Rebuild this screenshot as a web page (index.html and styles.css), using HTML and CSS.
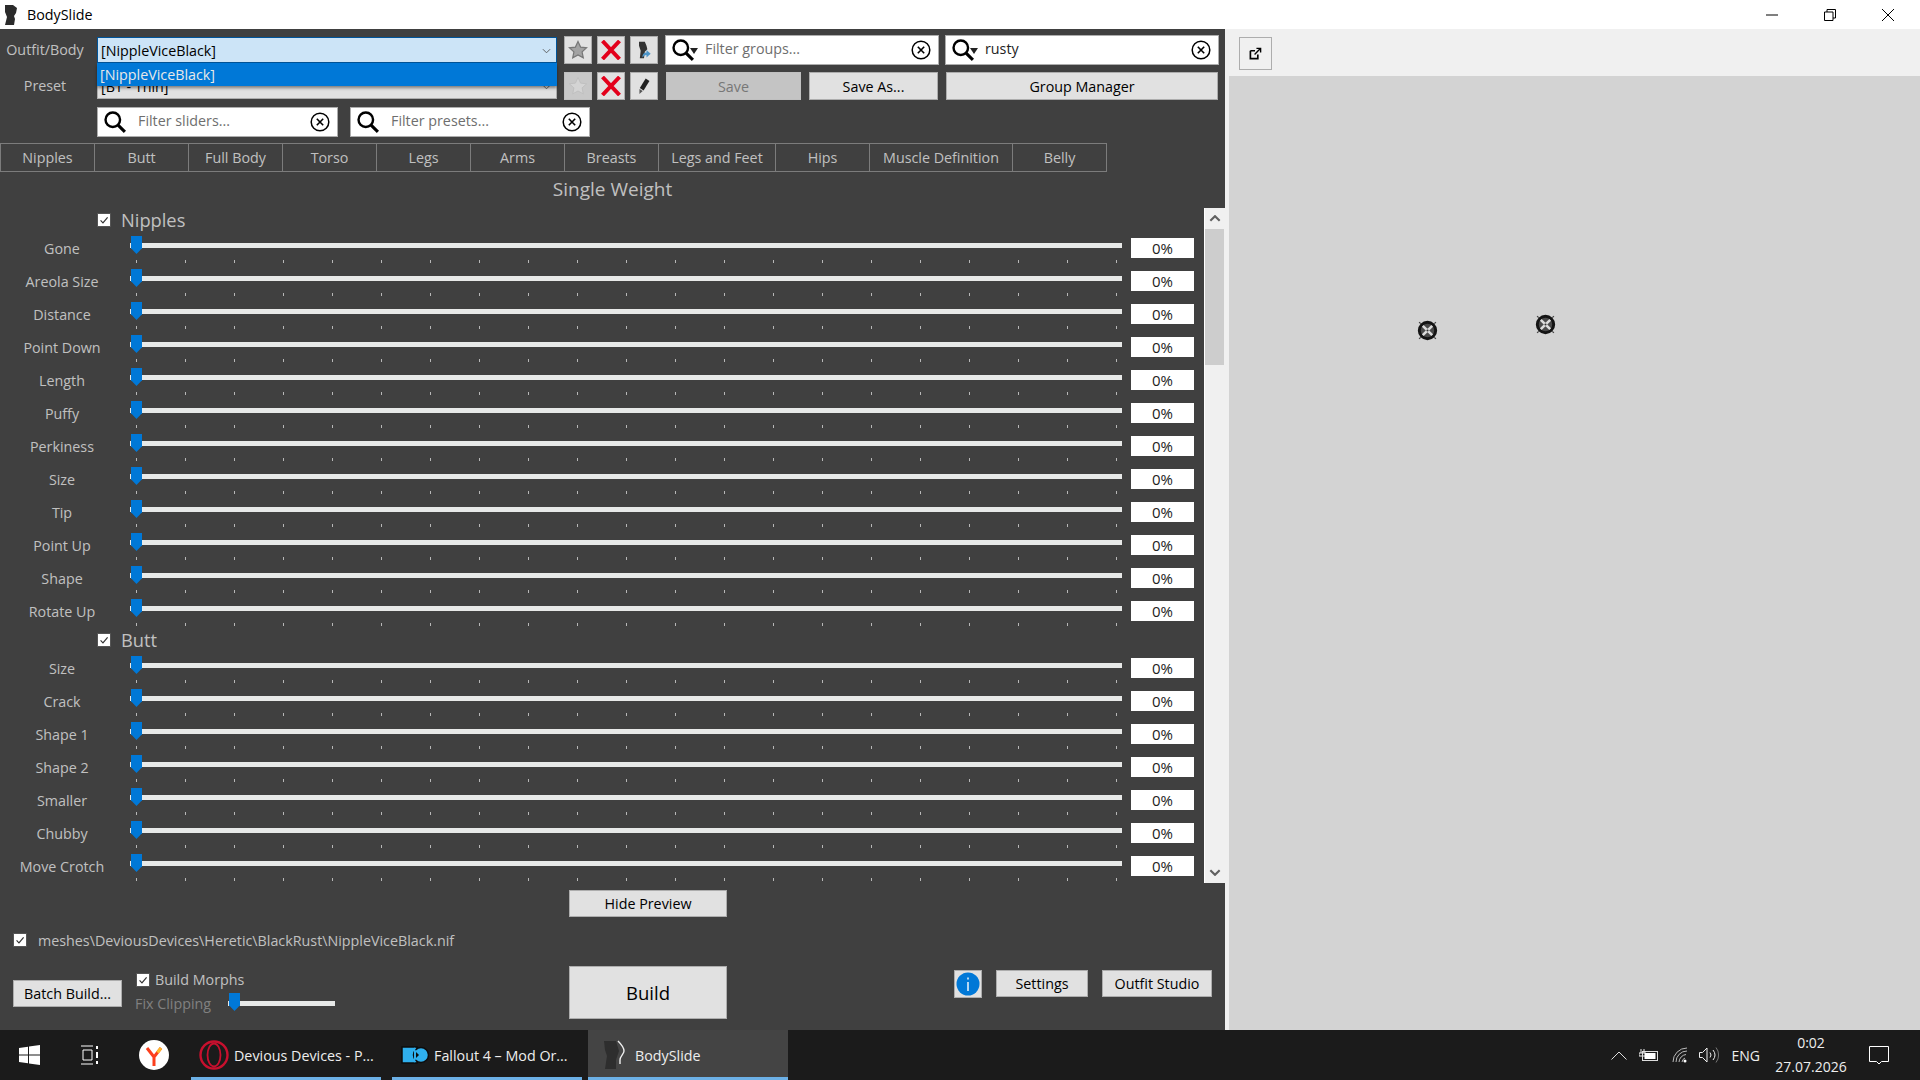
FILE: index.html
```html
<!DOCTYPE html>
<html lang="en">
<head>
    <meta charset="UTF-8">
    <title>BodySlide</title>
    <link rel="stylesheet" href="styles.css">
</head>
<body>
    <svg class="icon-defs" width="0" height="0">
        <defs>
            <symbol id="i-search" viewBox="0 0 20 20"><circle cx="8" cy="8" r="6.6" fill="none" stroke="#000" stroke-width="2.2"/><path d="M12.8 12.8 19 19" stroke="#000" stroke-width="2.8" fill="none"/></symbol>
            <symbol id="i-clear" viewBox="0 0 20 20"><circle cx="10" cy="10" r="8.8" fill="none" stroke="#000" stroke-width="1.5"/><path d="M6.8 6.8l6.4 6.4M13.2 6.8l-6.4 6.4" stroke="#000" stroke-width="1.6" fill="none"/></symbol>
            <symbol id="i-star" viewBox="0 0 20 20"><path d="M10 1.5l2.6 5.6 6 .7-4.5 4.1 1.2 6L10 15l-5.3 2.9 1.2-6L1.4 7.8l6-.7z" fill="#a3a3a3" stroke="#777" stroke-width="1.2"/></symbol>
            <symbol id="i-star-off" viewBox="0 0 20 20"><path d="M10 1.5l2.6 5.6 6 .7-4.5 4.1 1.2 6L10 15l-5.3 2.9 1.2-6L1.4 7.8l6-.7z" fill="#d4d4d4" stroke="#c0c0c0" stroke-width="1"/></symbol>
            <symbol id="i-cross" viewBox="0 0 20 20"><path d="M1.500 1l17 18M18.500 1l-17 18" stroke="#e3001b" stroke-width="4" fill="none"/></symbol>
            <symbol id="i-body" viewBox="0 0 20 24"><path d="M4 2h7l2 5 1 4-3 3-1 8H5l1-9-2-6z" fill="#333"/><path d="M8 21c0-4 2-6 5-6v-3l5 4.500-5 4.500v-3c-2 0-3 1-5 3z" fill="#4c94c8"/></symbol>
            <symbol id="i-pen" viewBox="0 0 20 24"><path d="M12 3l4.500 3-7 11.500-4.500-3z" fill="#222"/><path d="M4.500 15.500l4 2.500-4 3.500z" fill="#555"/></symbol>
            <symbol id="i-check" viewBox="0 0 14 14"><path d="M3 7.500l2.800 2.800L11.200 4" stroke="#333" stroke-width="1.400" fill="none"/></symbol>
            <symbol id="i-marker" viewBox="0 0 20 20"><circle cx="10" cy="10" r="7.800" fill="#4a4a4a" stroke="#141414" stroke-width="2.800"/><path d="M5.500 5.500l9 9M14.500 5.500l-9 9" stroke="#dcdcdc" stroke-width="2.400"/><circle cx="10" cy="10" r="1" fill="#333"/><path d="M2 2l1.500 1.500M18 2l-1.500 1.500M2 18l1.500-1.500M18 18l-1.500-1.500" stroke="#444" stroke-width="1.200"/></symbol>
        </defs>
    </svg>

    <header class="titlebar">
        <svg class="app-logo" viewBox="0 0 14 20"><path d="M1 0h8l4 3-1 5-2 3 1 3-1 6H1l2-8-2-5z" fill="#2b2b2b"/></svg>
        <span class="app-name">BodySlide</span>
        <div class="window-btns">
            <svg viewBox="0 0 12 12"><path d="M0 6h12" stroke="#000" fill="none"/></svg>
            <svg viewBox="0 0 12 12"><path d="M.5 3h8.500v8.500H.5zM3 3V.5h8.500V9H9" stroke="#000" fill="none"/></svg>
            <svg viewBox="0 0 12 12"><path d="M0 0l12 12M12 0L0 12" stroke="#000" fill="none"/></svg>
        </div>
    </header>

    <main class="app">
        <section class="panel">
            <div class="form-row row-outfit">
                <label class="form-label">Outfit/Body</label>
                <div class="combo combo-open">
                    <span>[NippleViceBlack]</span>
                    <svg class="combo-arrow" viewBox="0 0 10 6"><path d="M1 1l4 4 4-4" stroke="#555" fill="none"/></svg>
                    <div class="combo-list">[NippleViceBlack]</div>
                </div>
                <button class="icon-btn star-btn"><svg><use href="#i-star"/></svg></button>
                <button class="icon-btn"><svg><use href="#i-cross"/></svg></button>
                <button class="icon-btn"><svg><use href="#i-body"/></svg></button>
                <div class="search search-groups">
                    <svg class="search-icon"><use href="#i-search"/></svg>
                    <span class="caret"></span>
                    <span class="search-text">Filter groups...</span>
                    <svg class="clear-icon"><use href="#i-clear"/></svg>
                </div>
                <div class="search search-outfits">
                    <svg class="search-icon"><use href="#i-search"/></svg>
                    <span class="caret"></span>
                    <span class="search-text is-value">rusty</span>
                    <svg class="clear-icon"><use href="#i-clear"/></svg>
                </div>
            </div>

            <div class="form-row row-preset">
                <label class="form-label">Preset</label>
                <div class="combo">
                    <span>[BT - Thin]</span>
                    <svg class="combo-arrow" viewBox="0 0 10 6"><path d="M1 1l4 4 4-4" stroke="#555" fill="none"/></svg>
                </div>
                <button class="icon-btn star-btn is-disabled"><svg><use href="#i-star-off"/></svg></button>
                <button class="icon-btn"><svg><use href="#i-cross"/></svg></button>
                <button class="icon-btn"><svg><use href="#i-pen"/></svg></button>
                <button class="btn btn-save is-disabled">Save</button>
                <button class="btn btn-saveas">Save As...</button>
                <button class="btn btn-groups">Group Manager</button>
            </div>

            <div class="form-row row-filters">
                <div class="search search-sliders">
                    <svg class="search-icon"><use href="#i-search"/></svg>
                    <span class="search-text">Filter sliders...</span>
                    <svg class="clear-icon"><use href="#i-clear"/></svg>
                </div>
                <div class="search search-presets">
                    <svg class="search-icon"><use href="#i-search"/></svg>
                    <span class="search-text">Filter presets...</span>
                    <svg class="clear-icon"><use href="#i-clear"/></svg>
                </div>
            </div>

            <nav class="tabs">
                <a class="tab">Nipples</a>
                <a class="tab">Butt</a>
                <a class="tab">Full Body</a>
                <a class="tab">Torso</a>
                <a class="tab">Legs</a>
                <a class="tab">Arms</a>
                <a class="tab">Breasts</a>
                <a class="tab tab-wide">Legs and Feet</a>
                <a class="tab">Hips</a>
                <a class="tab tab-widest">Muscle Definition</a>
                <a class="tab">Belly</a>
            </nav>

            <div class="weight-title">Single Weight</div>

            <div class="slider-area">
                <div class="slider-list">
                    <div class="group-head"><span class="check"><svg><use href="#i-check"/></svg></span><span class="group-name">Nipples</span></div>
                    <div class="row"><span class="row-label">Gone</span><div class="slider"><i class="thumb"></i><i class="ticks"></i></div><span class="value">0%</span></div>
                    <div class="row"><span class="row-label">Areola Size</span><div class="slider"><i class="thumb"></i><i class="ticks"></i></div><span class="value">0%</span></div>
                    <div class="row"><span class="row-label">Distance</span><div class="slider"><i class="thumb"></i><i class="ticks"></i></div><span class="value">0%</span></div>
                    <div class="row"><span class="row-label">Point Down</span><div class="slider"><i class="thumb"></i><i class="ticks"></i></div><span class="value">0%</span></div>
                    <div class="row"><span class="row-label">Length</span><div class="slider"><i class="thumb"></i><i class="ticks"></i></div><span class="value">0%</span></div>
                    <div class="row"><span class="row-label">Puffy</span><div class="slider"><i class="thumb"></i><i class="ticks"></i></div><span class="value">0%</span></div>
                    <div class="row"><span class="row-label">Perkiness</span><div class="slider"><i class="thumb"></i><i class="ticks"></i></div><span class="value">0%</span></div>
                    <div class="row"><span class="row-label">Size</span><div class="slider"><i class="thumb"></i><i class="ticks"></i></div><span class="value">0%</span></div>
                    <div class="row"><span class="row-label">Tip</span><div class="slider"><i class="thumb"></i><i class="ticks"></i></div><span class="value">0%</span></div>
                    <div class="row"><span class="row-label">Point Up</span><div class="slider"><i class="thumb"></i><i class="ticks"></i></div><span class="value">0%</span></div>
                    <div class="row"><span class="row-label">Shape</span><div class="slider"><i class="thumb"></i><i class="ticks"></i></div><span class="value">0%</span></div>
                    <div class="row"><span class="row-label">Rotate Up</span><div class="slider"><i class="thumb"></i><i class="ticks"></i></div><span class="value">0%</span></div>

                    <div class="group-head"><span class="check"><svg><use href="#i-check"/></svg></span><span class="group-name">Butt</span></div>
                    <div class="row"><span class="row-label">Size</span><div class="slider"><i class="thumb"></i><i class="ticks"></i></div><span class="value">0%</span></div>
                    <div class="row"><span class="row-label">Crack</span><div class="slider"><i class="thumb"></i><i class="ticks"></i></div><span class="value">0%</span></div>
                    <div class="row"><span class="row-label">Shape 1</span><div class="slider"><i class="thumb"></i><i class="ticks"></i></div><span class="value">0%</span></div>
                    <div class="row"><span class="row-label">Shape 2</span><div class="slider"><i class="thumb"></i><i class="ticks"></i></div><span class="value">0%</span></div>
                    <div class="row"><span class="row-label">Smaller</span><div class="slider"><i class="thumb"></i><i class="ticks"></i></div><span class="value">0%</span></div>
                    <div class="row"><span class="row-label">Chubby</span><div class="slider"><i class="thumb"></i><i class="ticks"></i></div><span class="value">0%</span></div>
                    <div class="row"><span class="row-label">Move Crotch</span><div class="slider"><i class="thumb"></i><i class="ticks"></i></div><span class="value">0%</span></div>
                </div>
                <div class="scrollbar">
                    <div class="scroll-btn"><svg viewBox="0 0 10 6"><path d="M1 5l4-4 4 4" stroke="#606060" stroke-width="1.800" fill="none"/></svg></div>
                    <div class="scroll-track"><div class="scroll-thumb"></div></div>
                    <div class="scroll-btn"><svg viewBox="0 0 10 6"><path d="M1 1l4 4 4-4" stroke="#606060" stroke-width="1.800" fill="none"/></svg></div>
                </div>
            </div>

            <button class="btn btn-preview">Hide Preview</button>

            <div class="path-row">
                <span class="check"><svg><use href="#i-check"/></svg></span>
                <span>meshes\DeviousDevices\Heretic\BlackRust\NippleViceBlack.nif</span>
            </div>

            <div class="build-row">
                <button class="btn btn-batch">Batch Build...</button>
                <div class="morphs">
                    <div class="morph-line"><span class="check"><svg><use href="#i-check"/></svg></span><span class="morph-text">Build Morphs</span></div>
                    <div class="clip-line">
                        <span class="clip-label">Fix Clipping</span>
                        <div class="slider slider-small"><i class="thumb"></i></div>
                    </div>
                </div>
                <button class="btn btn-build">Build</button>
                <div class="side-btns">
                    <button class="icon-btn info-btn"><svg viewBox="0 0 24 24"><circle cx="12" cy="12" r="11.500" fill="#0078d7"/><path d="M12 10v9M12 5.500v2" stroke="#fff" stroke-width="1.400"/></svg></button>
                    <button class="btn btn-settings">Settings</button>
                    <button class="btn btn-studio">Outfit Studio</button>
                </div>
            </div>
        </section>

        <section class="preview">
            <div class="preview-bar">
                <button class="pop-btn"><svg viewBox="0 0 14 14"><path d="M1.500 4h5M1.500 4v8.500h8V8" stroke="#000" stroke-width="1.800" fill="none"/><path d="M6 8l6-6M8 1.500h4.500V6" stroke="#000" stroke-width="1.500" fill="none"/></svg></button>
            </div>
            <div class="canvas">
                <svg class="marker marker-a"><use href="#i-marker"/></svg>
                <svg class="marker marker-b"><use href="#i-marker"/></svg>
            </div>
        </section>
    </main>

    <footer class="taskbar">
        <svg class="start-icon" viewBox="0 0 21 20"><path d="M0 3l9-1.300V9.500H0zM10 1.500L21 0v9.500H10zM0 10.500h9v7.800L0 17zM10 10.500h11V20l-11-1.500z" fill="#fff"/></svg>
        <svg class="taskview-icon" viewBox="0 0 20 20"><path d="M1 1h12M1 19h12M3 5h9v10H3z" stroke="#fff" fill="none"/><path d="M17 1v3M17 7v6M17 16v3" stroke="#fff" stroke-width="2" fill="none"/></svg>
        <svg class="yandex-icon" viewBox="0 0 30 30"><ellipse cx="15" cy="15" rx="15" ry="15" fill="#fff"/><path d="M8 8l7 9 7-9M15 17v9" stroke="#fc3f1d" stroke-width="3" fill="none"/><path d="M18.500 12.500L22 8" stroke="#fdb92c" stroke-width="3" fill="none"/></svg>
        <div class="task task-opera">
            <svg viewBox="0 0 30 30"><ellipse cx="15" cy="15" rx="13.500" ry="13.500" fill="none" stroke="#c8102e" stroke-width="2.400"/><ellipse cx="15" cy="15" rx="6.500" ry="11.500" fill="none" stroke="#c8102e" stroke-width="1.800"/></svg>
            <span>Devious Devices - P...</span>
        </div>
        <div class="task task-fallout">
            <svg viewBox="0 0 28 18"><path d="M1 1h15v16H1z" fill="#2fb0ee" stroke="#0d0d0d" stroke-width="1.500"/><circle cx="20" cy="9" r="7.500" fill="#2fb0ee" stroke="#0d0d0d" stroke-width="1.500"/><path d="M13 1l4 8-4 8" fill="#2fb0ee"/><path d="M15 6l3 3-3 3z" fill="#0d0d0d"/></svg>
            <span>Fallout 4 – Mod Or...</span>
        </div>
        <div class="task task-body">
            <svg viewBox="0 0 24 30"><path d="M0 1h12l3 10-3 9v9H1l2-13-2-6z" fill="#2e2e2e"/><path d="M14 1c3 3 6 7 6 10s-4 5-4 9v4" stroke="#eee" stroke-width="1.400" fill="none"/></svg>
            <span>BodySlide</span>
        </div>
        <div class="tray">
            <svg class="tray-chevron" viewBox="0 0 16 9"><path d="M.5 8.500L8 1l7.500 7.500" stroke="#ddd" fill="none"/></svg>
            <svg class="tray-battery" viewBox="0 0 20 12"><path d="M2 0v4M5 0v4M0 4h7v3H0zM3.500 7v3" stroke="#eee" fill="none"/><rect x="3.500" y="2.500" width="15" height="9" fill="none" stroke="#ddd"/><rect x="5.500" y="4" width="11" height="6" fill="#fff"/></svg>
            <svg class="tray-wifi" viewBox="0 0 16 16"><path d="M1 15a14 14 0 0 1 14-14M4 15A11 11 0 0 1 15 4M7 15a8 8 0 0 1 7-7.500M10 15a5 5 0 0 1 3-4" stroke="#bbb" fill="none"/><circle cx="13" cy="14" r="1.500" fill="#fff"/></svg>
            <svg class="tray-volume" viewBox="0 0 20 16"><path d="M.5 5.500h3L8 1v14l-4.500-4.500h-3z" stroke="#eee" fill="none"/><path d="M11 5.500a4 4 0 0 1 0 5M14 3a8 8 0 0 1 0 10" stroke="#eee" fill="none"/><path d="M17 .5a12 12 0 0 1 0 15" stroke="#777" fill="none"/></svg>
            <span class="tray-lang">ENG</span>
            <div class="clock"><span>0:02</span><span>27.07.2026</span></div>
            <svg class="tray-note" viewBox="0 0 20 19"><path d="M.5.500h19v15h-7L10 18l-2.500-2.500h-7z" stroke="#fff" fill="none"/></svg>
        </div>
    </footer>
</body>
</html>
```

FILE: styles.css
```css
:root {
    --panel-bg: #404040;
    --chrome-bg: #f0f0f0;
    --btn-bg: #e1e1e1;
    --btn-border: #adadad;
    --text-light: #c0c0c0;
    --accent: #0078d7;
}

* {
    margin: 0;
    padding: 0;
    box-sizing: border-box;
    font-family: "Open Sans", "Noto Sans", sans-serif;
}

html, body {
    height: 100%;
    overflow: hidden;
}

body {
    display: flex;
    flex-direction: column;
    width: 1920px;
    height: 1080px;
    background: var(--chrome-bg);
    font-size: 14.3px;
}

.icon-defs {
    position: absolute;
}

/* title bar */
.titlebar {
    display: flex;
    align-items: center;
    height: 29px;
    padding-left: 4px;
    background: #fff;
    color: #000;
}

.app-logo {
    width: 14px;
    height: 20px;
    margin-right: 9px;
}

.window-btns {
    display: flex;
    margin-left: auto;
}

.window-btns svg {
    width: 12px;
    height: 12px;
    margin: 0 23px;
    overflow: visible;
}

.window-btns svg:last-child {
    margin-right: 26px;
}

/* main layout */
.app {
    display: flex;
    height: 1001px;
}

.panel {
    width: 1225px;
    padding-top: 6px;
    background: var(--panel-bg);
}

.preview {
    display: flex;
    flex-direction: column;
    flex: 1;
    margin-left: 4px;
}

.preview-bar {
    height: 47px;
    padding: 8px 0 0 10px;
}

.pop-btn {
    display: flex;
    align-items: center;
    justify-content: center;
    width: 33px;
    height: 33px;
    background: var(--chrome-bg);
    border: 1px solid var(--btn-border);
}

.pop-btn svg {
    width: 13px;
    height: 13px;
}

.canvas {
    position: relative;
    flex: 1;
    background: #d3d3d3;
}

.marker {
    position: absolute;
    width: 21px;
    height: 21px;
}

.marker-a {
    left: 188px;
    top: 244px;
}

.marker-b {
    left: 306px;
    top: 238px;
}

/* top controls */
.form-row {
    display: flex;
    align-items: center;
}

.row-outfit {
    height: 30px;
}

.row-preset {
    height: 28px;
    margin-top: 7px;
}

.row-filters {
    height: 30px;
    margin-top: 7px;
    padding-left: 97px;
}

.form-label {
    width: 90px;
    margin-right: 7px;
    padding-bottom: 2px;
    color: var(--text-light);
    text-align: center;
}

.combo {
    position: relative;
    display: flex;
    align-items: center;
    width: 460px;
    height: 26px;
    padding-left: 3px;
    background: var(--btn-bg);
    border: 1px solid var(--btn-border);
    color: #000;
}

.combo-open {
    background: #cce4f7;
    border-color: #005499;
}

.combo-arrow {
    position: absolute;
    right: 5px;
    top: 10px;
    width: 9px;
    height: 6px;
}

.combo-list {
    position: absolute;
    left: -1px;
    top: 25px;
    z-index: 5;
    width: 460px;
    height: 23px;
    padding: 2px 3px;
    background: var(--accent);
    color: #e8e8e8;
    box-shadow: 0 2px 3px rgba(0, 0, 0, 0.45);
}

.icon-btn {
    display: flex;
    align-items: center;
    justify-content: center;
    width: 28px;
    height: 28px;
    margin-left: 5px;
    background: var(--btn-bg);
    border: 1px solid var(--btn-border);
}

.icon-btn svg {
    width: 20px;
    height: 20px;
}

.star-btn {
    margin-left: 7px;
}

.star-btn.is-disabled {
    background: #c8c8c8;
    border-color: #c0c0c0;
}

.search {
    display: flex;
    align-items: center;
    width: 241px;
    height: 30px;
    padding: 0 7px 0 6px;
    background: #fff;
    border: 1px solid var(--btn-border);
}

.search-icon {
    width: 22px;
    height: 22px;
    flex: none;
}

.caret {
    width: 0;
    height: 0;
    margin: 2px 0 0 -4px;
    border-left: 4px solid transparent;
    border-right: 4px solid transparent;
    border-top: 6px solid #222;
}

.search-text {
    margin-left: 12px;
    padding-bottom: 3px;
    color: #6e6e6e;
}

.search-text.is-value {
    color: #222;
}

.search-groups .search-text,
.search-outfits .search-text {
    margin-left: 7px;
}

.clear-icon {
    width: 20px;
    height: 20px;
    margin-left: auto;
}

.search-groups {
    width: 274px;
    margin-left: 7px;
}

.search-outfits {
    width: 274px;
    margin-left: 6px;
}

.search-presets {
    margin-left: 12px;
    width: 240px;
}

.btn {
    height: 28px;
    background: var(--btn-bg);
    border: 1px solid var(--btn-border);
    color: #000;
    font-size: 14.3px;
}

.btn.is-disabled {
    background: #c4c4c4;
    border-color: #c0c0c0;
    color: #777;
}

.btn-save {
    width: 135px;
    margin-left: 8px;
}

.btn-saveas {
    width: 129px;
    margin-left: 8px;
}

.btn-groups {
    width: 272px;
    margin-left: 8px;
}

/* tabs */
.tabs {
    display: flex;
    height: 29px;
    margin-top: 6px;
}

.tab {
    display: flex;
    align-items: center;
    justify-content: center;
    width: 94px;
    border: 1px solid #7c7c7c;
    border-left-width: 0;
    color: var(--text-light);
}

.tab:first-child {
    width: 95px;
    border-left-width: 1px;
}

.tab-wide {
    width: 117px;
}

.tab-widest {
    width: 143px;
}

.weight-title {
    height: 36px;
    padding-top: 4px;
    color: var(--text-light);
    font-size: 19px;
    line-height: 27px;
    text-align: center;
}

/* slider list */
.slider-area {
    display: flex;
    height: 675px;
}

.slider-list {
    width: 1204px;
    overflow: hidden;
}

.group-head {
    display: flex;
    align-items: center;
    height: 24px;
    padding-left: 97px;
    color: var(--text-light);
    font-size: 18.3px;
}

.group-name {
    padding-bottom: 2px;
}

.check {
    display: block;
    flex: none;
    width: 14px;
    height: 14px;
    margin-right: 10px;
    background: #fff;
    border: 1px solid #555;
}

.check svg {
    display: block;
    width: 12px;
    height: 12px;
}

.path-row .check {
    margin-right: 11px;
}

.row {
    display: flex;
    height: 33px;
}

.row-label {
    width: 124px;
    margin-right: 6px;
    color: var(--text-light);
    line-height: 33px;
    text-align: center;
}

.slider {
    position: relative;
    flex: none;
    width: 992px;
    margin-right: 9px;
}

.slider::before {
    content: "";
    position: absolute;
    left: 0;
    right: 0;
    top: 11px;
    height: 5px;
    background: #e7e9e8;
}

.thumb {
    position: absolute;
    left: 1px;
    top: 4px;
    width: 11px;
    height: 18px;
    background: var(--accent);
    clip-path: polygon(0 0, 100% 0, 100% 68%, 50% 100%, 0 68%);
}

.ticks {
    position: absolute;
    left: 6px;
    top: 28px;
    width: 981px;
    height: 3px;
    background: repeating-linear-gradient(to right, #b8b8b8 0, #b8b8b8 1px, transparent 1px, transparent 49px);
}

.value {
    flex: none;
    width: 63px;
    height: 20px;
    margin-top: 6px;
    background: #fff;
    color: #222;
    font-size: 15px;
    line-height: 21px;
    text-align: center;
}

.scrollbar {
    display: flex;
    flex-direction: column;
    width: 21px;
    background: var(--chrome-bg);
    border-left: 1px solid #fff;
}

.scroll-btn {
    display: flex;
    align-items: center;
    justify-content: center;
    height: 21px;
}

.scroll-btn svg {
    width: 12px;
    height: 7px;
}

.scroll-track {
    flex: 1;
}

.scroll-thumb {
    width: 19px;
    height: 136px;
    background: #cdcdcd;
}

/* bottom controls */
.btn-preview {
    display: block;
    width: 158px;
    height: 27px;
    margin: 7px 0 0 569px;
}

.path-row {
    display: flex;
    align-items: center;
    height: 14px;
    margin-top: 16px;
    padding-left: 13px;
    color: var(--text-light);
}

.build-row {
    display: flex;
    align-items: flex-start;
    margin-top: 19px;
    padding-left: 13px;
}

.btn-batch {
    width: 109px;
    height: 27px;
    margin-top: 14px;
}

.morphs {
    width: 434px;
    margin-left: 13px;
    padding-top: 7px;
}

.morph-line {
    display: flex;
    align-items: center;
    height: 14px;
    padding-left: 1px;
    color: var(--text-light);
}

.morph-line .check {
    margin-right: 5px;
}

.morph-text {
    padding-bottom: 2px;
}

.clip-line {
    display: flex;
    align-items: flex-start;
    height: 26px;
    margin-top: 3px;
}

.clip-label {
    width: 93px;
    color: #808080;
    line-height: 27px;
}

.slider-small {
    width: 107px;
}

.slider-small .thumb {
    top: 3px;
}

.btn-build {
    width: 158px;
    height: 53px;
    font-size: 18.5px;
}

.side-btns {
    display: flex;
    margin: 4px 0 0 227px;
}

.info-btn {
    margin-left: 0;
}

.info-btn svg {
    width: 24px;
    height: 24px;
}

.btn-settings {
    width: 92px;
    height: 27px;
    margin-left: 14px;
}

.btn-studio {
    width: 110px;
    height: 27px;
    margin-left: 14px;
}

/* taskbar */
.taskbar {
    display: flex;
    align-items: center;
    height: 50px;
    background: #1b1b1b;
    color: #eee;
}

.start-icon {
    width: 21px;
    height: 20px;
    margin-left: 19px;
}

.taskview-icon {
    width: 20px;
    height: 20px;
    margin-left: 40px;
}

.yandex-icon {
    width: 30px;
    height: 30px;
    margin-left: 39px;
}

.task {
    display: flex;
    align-items: center;
    height: 50px;
    padding-top: 3px;
    border-bottom: 3px solid #6cb0e6;
}

.task-opera {
    width: 190px;
    margin-left: 22px;
    padding-left: 8px;
}

.task-opera svg {
    width: 30px;
    height: 30px;
    margin-right: 5px;
}

.task-fallout {
    width: 190px;
    margin-left: 11px;
    padding-left: 9px;
}

.task-fallout svg {
    width: 28px;
    height: 18px;
    margin-right: 5px;
}

.task-body {
    width: 200px;
    margin-left: 6px;
    padding-left: 16px;
    background: #444;
}

.task-body svg {
    width: 24px;
    height: 30px;
    margin-right: 7px;
}

.tray {
    display: flex;
    align-items: center;
    margin-left: auto;
    height: 50px;
    padding-right: 31px;
}

.tray-chevron {
    width: 16px;
    height: 9px;
}

.tray-battery {
    width: 20px;
    height: 12px;
    margin-left: 12px;
}

.tray-wifi {
    width: 16px;
    height: 16px;
    margin-left: 13px;
}

.tray-volume {
    width: 20px;
    height: 16px;
    margin-left: 11px;
}

.tray-lang {
    margin-left: 13px;
    font-size: 14px;
}

.clock {
    display: flex;
    flex-direction: column;
    align-items: center;
    width: 70px;
    margin-left: 16px;
    font-size: 14px;
    line-height: 24px;
}

.tray-note {
    width: 20px;
    height: 19px;
    margin-left: 23px;
}
```
